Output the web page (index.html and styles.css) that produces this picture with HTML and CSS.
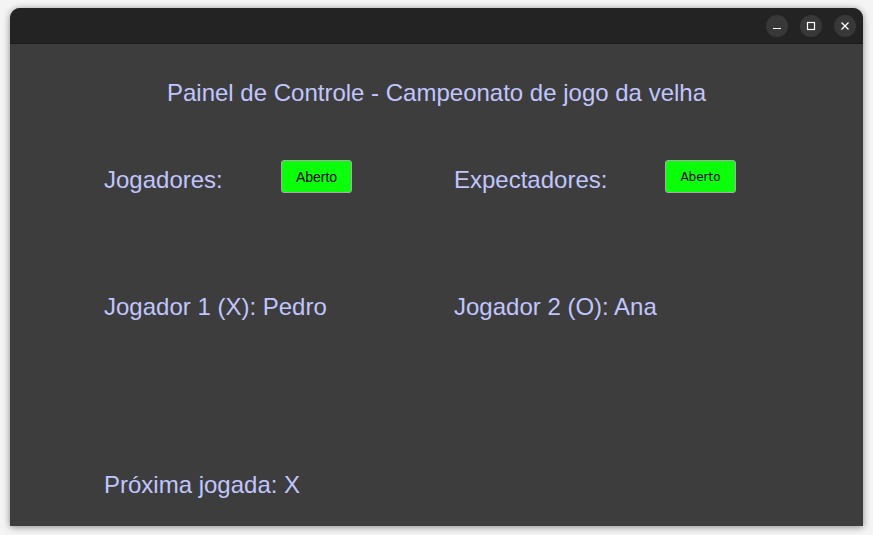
FILE: index.html
```html
<!DOCTYPE html>
<html lang="pt">
<head>
<meta charset="utf-8">
<title>Painel de Controle</title>
<link rel="stylesheet" href="styles.css">
</head>
<body>
<div class="window">
  <div class="titlebar">
    <button class="wbtn" aria-label="Minimizar">
      <svg width="10" height="10" viewBox="0 0 10 10"><path d="M1 7.5h8" stroke="#fff" stroke-width="1.2"/></svg>
    </button>
    <button class="wbtn" aria-label="Maximizar">
      <svg width="10" height="10" viewBox="0 0 10 10"><rect x="1.5" y="1.5" width="7" height="7" fill="none" stroke="#fff" stroke-width="1.2"/></svg>
    </button>
    <button class="wbtn" aria-label="Fechar">
      <svg width="10" height="10" viewBox="0 0 10 10"><path d="M1.5 1.5l7 7M8.5 1.5l-7 7" stroke="#fff" stroke-width="1.3"/></svg>
    </button>
  </div>
  <div class="content">
    <h1 class="title">Painel de Controle - Campeonato de jogo da velha</h1>
    <div class="row row-status">
      <span class="label">Jogadores:</span>
      <button class="toggle toggle-a">Aberto</button>
      <span class="label">Expectadores:</span>
      <button class="toggle toggle-b">Aberto</button>
    </div>
    <div class="row row-players">
      <span class="label span2">Jogador 1 (X): Pedro</span>
      <span class="label span2">Jogador 2 (O): Ana</span>
    </div>
    <div class="row row-next">
      <span class="label span4">Próxima jogada: X</span>
    </div>
  </div>
</div>
</body>
</html>
```
FILE: styles.css
```css
html, body {
  margin: 0;
  padding: 0;
}
body {
  background: #f4f4f4;
  width: 873px;
  height: 535px;
  overflow: hidden;
  font-family: "Liberation Sans", Arial, sans-serif;
}
.window {
  margin: 8px 0 0 10px;
  width: 853px;
  height: 518px;
  border-radius: 10px 10px 0 0;
  overflow: hidden;
  box-shadow: 0 1px 7px rgba(0, 0, 0, 0.45);
  display: flex;
  flex-direction: column;
  background: #3d3d3d;
}
.titlebar {
  height: 36px;
  flex: 0 0 36px;
  background: #232323;
  border-bottom: 1px solid #1b1b1b;
  display: flex;
  align-items: center;
  justify-content: flex-end;
  gap: 12px;
  padding-right: 7px;
  box-sizing: border-box;
}
.wbtn {
  width: 22px;
  height: 22px;
  border-radius: 50%;
  border: none;
  background: #383838;
  padding: 0;
  display: flex;
  align-items: center;
  justify-content: center;
}
.content {
  flex: 1;
  padding: 36px 0 0 94px;
  color: #c0c6fd;
}
.title {
  margin: 0 0 0 -94px;
  font-weight: normal;
  font-size: 24px;
  line-height: 26px;
  height: 26px;
  text-align: center;
}
.row {
  display: grid;
  grid-template-columns: 177px 173px 211px 71px;
  align-items: end;
}
.label {
  font-size: 24px;
  line-height: 26px;
  white-space: nowrap;
}
.span2 { grid-column: span 2; }
.span4 { grid-column: span 4; }
.row-status { margin-top: 54px; }
.row-players { margin-top: 101px; }
.row-next { margin-top: 152px; }
.toggle {
  width: 71px;
  height: 33px;
  background: #0bff0b;
  border: 1px solid #a8a8a8;
  border-radius: 3px;
  color: #000;
  padding: 0;
  box-sizing: border-box;
}
.toggle-a {
  font-family: "Liberation Sans", Arial, sans-serif;
  font-size: 14px;
}
.toggle-b {
  font-family: "DejaVu Sans", sans-serif;
  font-size: 12px;
}
```
